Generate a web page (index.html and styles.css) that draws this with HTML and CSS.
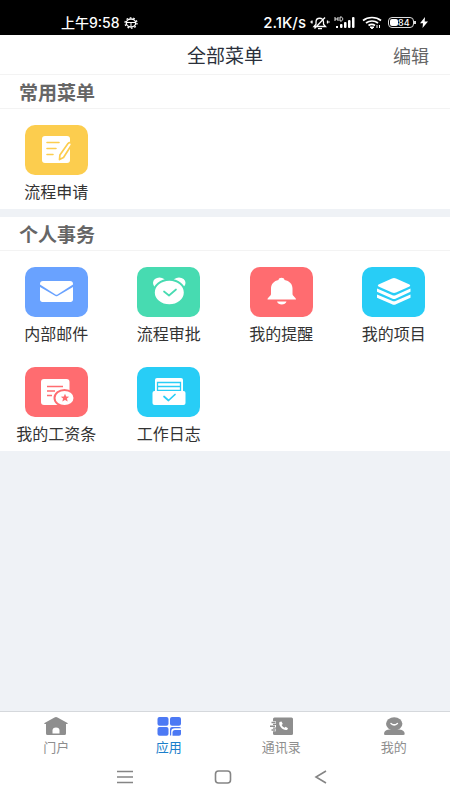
FILE: index.html
```html
<!DOCTYPE html>
<html lang="zh-CN">
<head>
<meta charset="utf-8">
<meta name="viewport" content="width=device-width, initial-scale=1">
<title>全部菜单</title>
<link rel="stylesheet" href="styles.css">
</head>
<body>
<div class="status">
  <div class="status-group">
    <span>上午9:58</span>
    <svg width="14" height="12" viewBox="0 0 14 12" fill="none" stroke="#fff"><ellipse cx="7" cy="6" rx="4.7" ry="4" stroke-width="1.4"/><ellipse cx="7" cy="6" rx="6" ry="5.2" stroke-width="1.3" stroke-dasharray="1.7 1.8"/><path d="M3 5.5h8M7 6v3.5"/></svg>
  </div>
  <div class="status-group">
    <span class="speed">2.1K/s</span>
    <svg width="20" height="14" viewBox="0 0 20 14" fill="none" stroke="#fff" stroke-width="1.3"><path d="M4 10.500h11.500l-2-2.200V6c0-5-7.500-5-7.500 0v2.300zM8 12.700h4M4.500 12.500 15 1.500M2 4.500v3M17.500 4.500v3M.5 6h1M18.500 6h1"/></svg>
    <svg width="22" height="13" viewBox="0 0 22 13" fill="#fff"><path d="M1 1v4M4 1v4M1 3h3M6 1v4h1c2.300 0 2.300-4 0-4H6" fill="none" stroke="#fff" stroke-width=".9"/><rect x="2" y="10" width="2" height="2"/><rect x="6" y="8" width="2.500" height="4" rx="1"/><rect x="10" y="6" width="2.500" height="6" rx="1"/><rect x="14" y="4" width="2.500" height="8" rx="1"/><rect x="18" y="1" width="2.500" height="11" rx="1"/></svg>
    <svg class="wifi" width="20" height="13" viewBox="0 0 20 13" fill="none" stroke="#fff" stroke-width="1.700"><path d="M1 4.500c5-4 13-4 18 0M4 7c3.500-2.700 8.500-2.700 12 0M6.500 9.500c2-1.500 4.500-1.500 6.500 0"/><path d="M8 11h4l-2 1.800zM15 9v3M17.500 9v3" fill="#fff" stroke-width="1"/></svg>
    <span class="battery"><span class="battery-level"></span><span class="battery-text">84</span></span>
    <svg width="8" height="11" viewBox="0 0 8 11" fill="#fff"><path d="M5 0 0 6.300h3L2.500 11 8 4.500H4.700z"/></svg>
  </div>
</div>
<header class="header">
  <h1 class="title">全部菜单</h1>
  <button class="edit" type="button">编辑</button>
</header>
<main class="main">
  <section class="section">
    <h2 class="section-title">常用菜单</h2>
    <div class="grid">
      <a class="item" href="#apply"><span class="tile yellow"><svg width="63" height="50" viewBox="0 0 63 50"><rect x="17" y="11" width="28" height="27" rx="3" fill="#fff"/><path d="M22 17.500h12M22 23.500h9M22 29.500h6" stroke="#fccd4e" stroke-width="1.600" stroke-linecap="round"/><path d="M43 18.500c2-2.200 4.500 0 3 2.200L38.500 32.500l-4 2 .4-4.500z" fill="#fff" stroke="#fccd4e" stroke-width="1.700" stroke-linejoin="round"/></svg></span><span class="label">流程申请</span></a>
    </div>
  </section>
  <section class="section">
    <h2 class="section-title">个人事务</h2>
    <div class="grid">
      <a class="item" href="#mail"><span class="tile blue"><svg width="63" height="50" viewBox="0 0 63 50" fill="#fff"><path d="M15 17.500V17c0-2 1-3 3-3h27c2 0 3 1 3 3v.5L32.500 27.500q-1 .5-2 0z"/><path d="M15 20l15.500 9q1 .5 2 0L48 20v12.500c0 1.500-1 2.500-2.500 2.500h-28C16 35 15 34 15 32.500z"/></svg></span><span class="label">内部邮件</span></a>
      <a class="item" href="#approval"><span class="tile green"><svg width="63" height="50" viewBox="0 0 63 50"><g fill="#fff"><ellipse cx="22.500" cy="16" rx="6.500" ry="5.500"/><ellipse cx="42" cy="16" rx="6.500" ry="5.500"/><ellipse cx="32.300" cy="25.500" rx="15.500" ry="12.800" stroke="#47dbb1" stroke-width="2"/></g><path d="M27 24.500l5 4 7-6" fill="none" stroke="#47dbb1" stroke-width="1.700" stroke-linecap="round" stroke-linejoin="round"/></svg></span><span class="label">流程审批</span></a>
      <a class="item" href="#remind"><span class="tile red"><svg width="63" height="50" viewBox="0 0 63 50" fill="#fff"><path d="M28.500 13c0-3 6-3 6 0 5 1 8 4 8 8.500V27c0 2 3.500 3.500 3.500 5.500H17.500c0-2 3.500-3.500 3.500-5.500v-5.500c0-4.500 3-7.500 7.500-8.500zM27 34.500h9.500c-1 4-8.500 4-9.500 0z"/></svg></span><span class="label">我的提醒</span></a>
      <a class="item" href="#project"><span class="tile cyan"><svg width="63" height="50" viewBox="0 0 63 50" fill="#fff"><path d="M30 11.500q2-.8 4 0l13.500 6q1.500 1 0 2l-13.500 6q-2 .8-4 0l-13.500-6q-1.500-1 0-2zM15 21.500l15 6.500q2 1 4 0l14.500-6.500v3.200L34 31.500q-2 1-4 0l-15-6.800zM15 27.500l15 6.300q2 1 4 0l14.500-6.300v3.200L34 37.200q-2 1-4 0l-15-6.500z"/></svg></span><span class="label">我的项目</span></a>
      <a class="item" href="#payroll"><span class="tile red"><svg width="63" height="50" viewBox="0 0 63 50"><rect x="16" y="12" width="28.500" height="26" rx="3" fill="#fff"/><path d="M22 19.500h16M22 24h8M22 28.500h5" stroke="#ff6c70" stroke-width="1.700"/><ellipse cx="39.500" cy="31" rx="10" ry="8" fill="#fff" stroke="#ff6c70" stroke-width="2"/><path d="M40 26.800l1.200 2.700 3 .2-2.300 1.900.8 2.800-2.700-1.500-2.700 1.500.8-2.800-2.300-1.900 3-.2z" fill="#ff6c70"/></svg></span><span class="label">我的工资条</span></a>
      <a class="item" href="#log"><span class="tile cyan"><svg width="63" height="50" viewBox="0 0 63 50" fill="none"><path d="M18 24V13q0-2 2-2h24q2 0 2 2v11z" fill="#fff"/><path d="M20.500 15.500h23v8h-23zM20.500 19.500h23" stroke="#28cdf6" stroke-width="1.300"/><path d="M17.500 24h29q2 0 2 2v10q0 2-2 2h-29q-2 0-2-2V26q0-2 2-2z" fill="#fff"/><path d="M27 29.500l4.500 4L38 27.500" stroke="#28cdf6" stroke-width="1.700" stroke-linecap="round" stroke-linejoin="round"/></svg></span><span class="label">工作日志</span></a>
    </div>
  </section>
</main>
<nav class="tabs">
  <a class="tab" href="#portal"><svg width="26" height="20" viewBox="0 0 26 20" fill="#8e8e8e"><path d="M13 0q.8 0 1.500.5L24.500 6q1 1-.5 1h-1v9.500q0 1.500-1.500 1.500h-17Q3 18 3 16.500V7H2Q.5 7 1.500 6L11.500.5Q12.200 0 13 0z"/><path d="M9.500 16.500v-3q0-3 3.500-3t3.500 3v3z" fill="#fff"/></svg><span>门户</span></a>
  <a class="tab active" href="#apps"><svg width="26" height="20" viewBox="0 0 26 20" fill="#4c79f4"><rect x="1.500" width="11" height="8.700" rx="2"/><rect x="14" width="11" height="8.700" rx="2"/><rect x="1.500" y="10" width="11" height="8.700" rx="2"/><path d="M14 18.500V12q0-2 2-2h7q2 0 2 1.200h-6q-3.800 0-3.800 3.300v4z"/><path d="M16.500 18.700V15.500q0-2.500 2.500-2.500h6v4q0 1.700-2 1.700z"/></svg><span>应用</span></a>
  <a class="tab" href="#contacts"><svg width="26" height="20" viewBox="0 0 26 20" fill="#8e8e8e"><rect x="5" y=".5" width="20" height="17.500" rx="1.500"/><path d="M5 5.500h3M5 9.300h3M5 13h3" stroke="#fff" stroke-width="2.500"/><path d="M3.500 5.500h4M2 9.300h5M3.500 13h4" stroke="#8e8e8e" stroke-width="1.400"/><path d="M11.500 5l2-.5 1.300 2.500-1.200 1q1 2 3 2.800l1-1 2.400 1.400-.7 1.600c-3.500 1.500-9.500-4-7.800-7.800z" fill="#fff"/></svg><span>通讯录</span></a>
  <a class="tab" href="#me"><svg width="26" height="20" viewBox="0 0 26 20" fill="#8e8e8e"><ellipse cx="13.200" cy="6.800" rx="8.200" ry="6.600"/><path d="M8 12.500h10.500c3.500.5 5.200 2 5.200 4.500q0 1-1.500 1h-18Q3 18 3 17c0-2.500 1.500-4 5-4.500z"/><path d="M10 6.500q3.200 2.800 6.400 0" fill="none" stroke="#fff" stroke-width="1.500" stroke-linecap="round"/></svg><span>我的</span></a>
</nav>
<div class="system">
  <button type="button" aria-label="最近任务"><svg width="18" height="16" viewBox="0 0 18 16" stroke="#858585" stroke-width="1.500"><path d="M1 2.500h16M1 8h16M1 13.500h16"/></svg></button>
  <button type="button" aria-label="主屏幕"><svg width="18" height="16" viewBox="0 0 18 16" fill="none" stroke="#858585" stroke-width="1.600"><rect x="1.500" y="2" width="15" height="12" rx="3"/></svg></button>
  <button type="button" aria-label="返回"><svg width="18" height="16" viewBox="0 0 18 16" fill="none" stroke="#858585" stroke-width="1.600"><path d="M14 2 4 8l10 6"/></svg></button>
</div>
</body>
</html>
```
FILE: styles.css
```css
* {
  box-sizing: border-box;
}

body {
  margin: 0;
  min-height: 100vh;
  display: flex;
  flex-direction: column;
  background: #fff;
  color: #333;
  font-family: "Noto Sans CJK SC", sans-serif;
}

a {
  color: inherit;
  text-decoration: none;
}

button {
  padding: 0;
  border: 0;
  background: none;
  font: inherit;
}

svg {
  display: block;
}

.status {
  display: flex;
  justify-content: space-between;
  height: 35px;
  padding: 12px 22px 2px 61px;
  background: #000;
  color: #fff;
  font-family: Inter, "Noto Sans CJK SC", sans-serif;
  font-size: 14px;
  font-weight: 500;
  line-height: 20px;
}

.status-group {
  display: flex;
  align-items: center;
  gap: 4px;
}

.speed {
  font-size: 15px;
}

.wifi {
  margin: 0 2px;
}

.battery {
  position: relative;
  display: flex;
  width: 26px;
  height: 11px;
  margin-right: 2px;
  padding: 1px;
  border: 1px solid #ddd;
  border-radius: 4px;
}

.battery::after {
  content: "";
  position: absolute;
  top: 3px;
  right: -3px;
  width: 2px;
  height: 3px;
  background: #ddd;
}

.battery-level {
  width: 8px;
  border-radius: 2px;
  background: #fff;
}

.battery-text {
  font-size: 9px;
  line-height: 7px;
}

.header {
  display: grid;
  grid-template-columns: 1fr auto 1fr;
  align-items: center;
  height: 40px;
  border-bottom: 1px solid #f3f3f3;
}

.title {
  grid-column: 2;
  margin: 0;
  color: #2b303b;
  font-size: 19px;
  font-weight: 400;
  line-height: 28px;
}

.edit {
  justify-self: end;
  margin-right: 21px;
  color: #666;
  font-size: 18px;
  line-height: 28px;
}

.main {
  flex: 1;
  background: #eff2f6;
}

.section {
  margin-bottom: 8px;
  background: #fff;
}

.section-title {
  height: 34px;
  margin: 0;
  padding-left: 19px;
  border-bottom: 1px solid #f3f3f3;
  color: #666;
  font-size: 19px;
  font-weight: 700;
  line-height: 34px;
}

.grid {
  display: grid;
  grid-template-columns: repeat(4, 1fr);
  row-gap: 18px;
  padding: 16px 0 2px;
}

.item {
  display: flex;
  flex-direction: column;
  align-items: center;
}

.tile {
  border-radius: 10px;
}

.yellow {
  background: #fccd4e;
}

.blue {
  background: #69a2ff;
}

.green {
  background: #47dbb1;
}

.red {
  background: #ff6c70;
}

.cyan {
  background: #28cdf6;
}

.label {
  font-size: 16px;
  line-height: 32px;
  white-space: nowrap;
}

.tabs {
  display: grid;
  grid-template-columns: repeat(4, 1fr);
  padding-top: 5px;
  border-top: 1px solid #d5d8dc;
}

.tab {
  display: flex;
  flex-direction: column;
  align-items: center;
  color: #8e8e8e;
  font-size: 13px;
  line-height: 20px;
}

.active {
  color: #1b7fcb;
}

.system {
  display: flex;
  justify-content: center;
  gap: 80px;
  padding: 12px 4px 15px 0;
}
```
